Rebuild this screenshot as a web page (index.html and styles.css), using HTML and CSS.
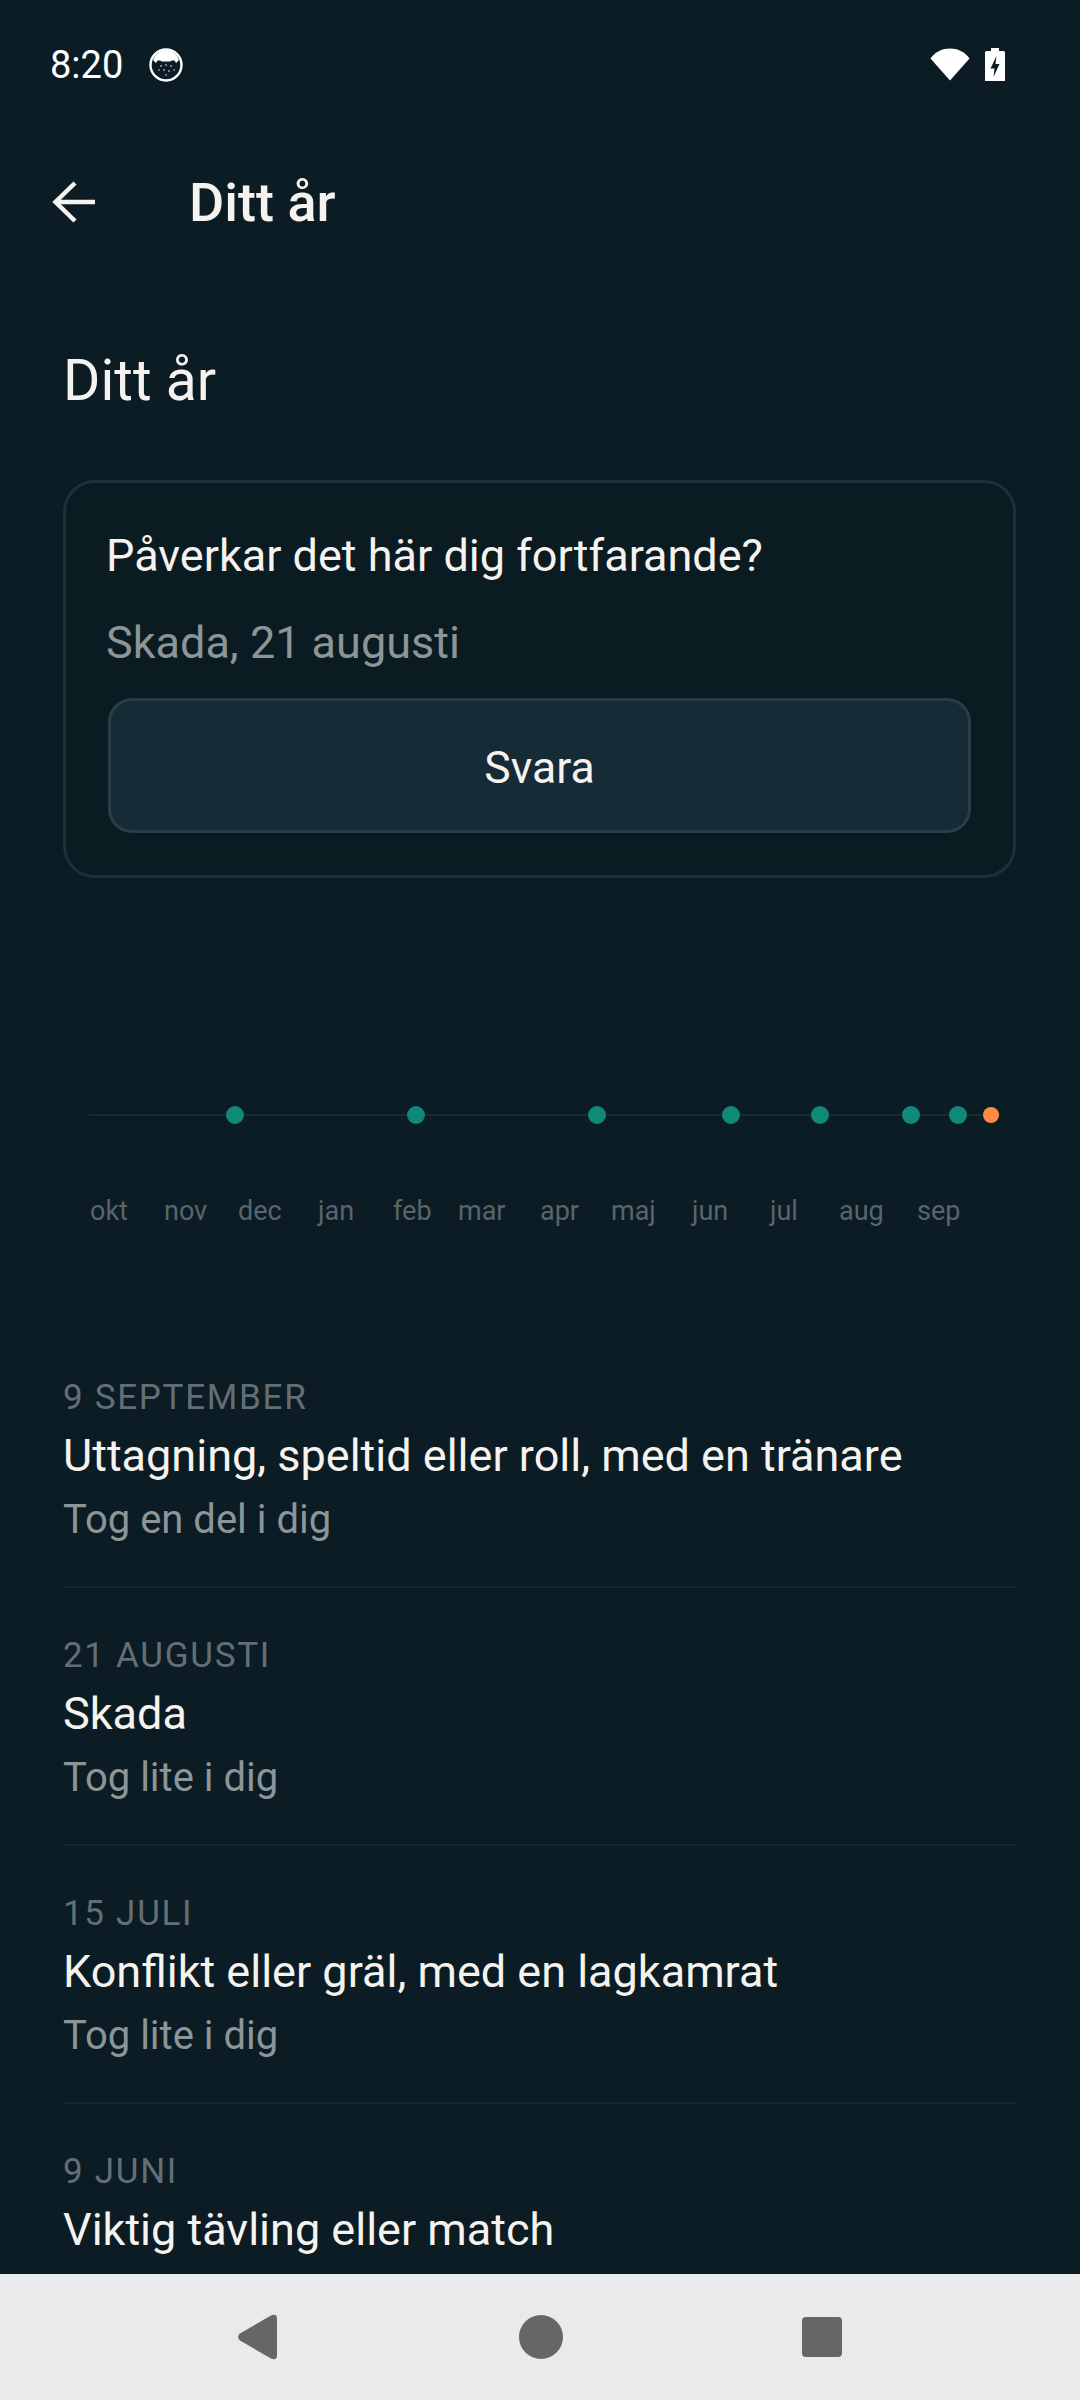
FILE: index.html
```html
<!DOCTYPE html>
<html lang="sv">
<head>
    <meta charset="UTF-8">
    <meta name="viewport" content="width=device-width, initial-scale=1.0">
    <title>Ditt år</title>
    <link rel="stylesheet" href="styles.css">
</head>
<body>
    <div class="screen">
        <div class="statusbar">
            <div class="status-left">
                <span class="clock">8:20</span>
                <svg class="cat" width="34" height="34" viewBox="0 0 34 34">
                    <circle cx="17" cy="17" r="15.500" fill="#0b1c25" stroke="#fff" stroke-width="2.400"/>
                    <path d="M4 12C7 5 11 2.500 17 2.500S27 5 30 12L27 15 25.500 12.500 23 12.500 21 13.500H13L11 12.500 8.500 12.500 7 15Z" fill="#fff"/>
                    <g fill="#fff">
                        <circle cx="12" cy="18" r=".8"/>
                        <circle cx="17" cy="17" r=".8"/>
                        <circle cx="22" cy="18" r=".8"/>
                        <circle cx="10" cy="22" r=".7"/>
                        <circle cx="15" cy="22" r=".8"/>
                        <circle cx="20" cy="23" r=".8"/>
                        <circle cx="25" cy="22" r=".7"/>
                        <circle cx="17" cy="27" r=".7"/>
                    </g>
                </svg>
            </div>
            <div class="status-right">
                <svg width="40" height="33" viewBox="0 0 40 33"><path d="M.5 10.500C5.500 3.500 12.500.5 20 .5S34.500 3.500 39.500 10.500L20 32.500Z" fill="#fff"/></svg>
                <svg width="20" height="33" viewBox="0 0 20 33"><path d="M6 0H14V3H18.500Q20 3 20 4.500V33H0V4.500Q0 3 1.500 3H6Z" fill="#fff"/><path d="M11.500 8 5.500 20.500H9.500L8.500 29 14.500 16H10.500Z" fill="#0b1c25"/></svg>
            </div>
        </div>

        <div class="topbar">
            <svg class="back" width="44" height="42" viewBox="0 0 44 42"><path d="M43 21H4M23 2 3.500 21 23 40" fill="none" stroke="#f6f3ee" stroke-width="4.500"/></svg>
            <h2>Ditt år</h2>
        </div>

        <div class="content">
            <h1>Ditt år</h1>

            <div class="card">
                <div class="question">Påverkar det här dig fortfarande?</div>
                <div class="event">Skada, 21 augusti</div>
                <button type="button" class="answer">Svara</button>
            </div>

            <div class="chart">
                <div class="line"></div>
                <span class="dot" style="left:163px"></span>
                <span class="dot" style="left:344px"></span>
                <span class="dot" style="left:525px"></span>
                <span class="dot" style="left:659px"></span>
                <span class="dot" style="left:748px"></span>
                <span class="dot" style="left:839px"></span>
                <span class="dot" style="left:886px"></span>
                <span class="dot now" style="left:920px"></span>
                <span class="month" style="left:27px">okt</span>
                <span class="month" style="left:101px">nov</span>
                <span class="month" style="left:175px">dec</span>
                <span class="month" style="left:255px">jan</span>
                <span class="month" style="left:330px">feb</span>
                <span class="month" style="left:395px">mar</span>
                <span class="month" style="left:477px">apr</span>
                <span class="month" style="left:548px">maj</span>
                <span class="month" style="left:629px">jun</span>
                <span class="month" style="left:707px">jul</span>
                <span class="month" style="left:776px">aug</span>
                <span class="month" style="left:854px">sep</span>
            </div>

            <div class="list">
                <div class="row">
                    <div class="date">9 SEPTEMBER</div>
                    <div class="title">Uttagning, speltid eller roll, med en tränare</div>
                    <div class="sub">Tog en del i dig</div>
                </div>
                <div class="row">
                    <div class="date">21 AUGUSTI</div>
                    <div class="title">Skada</div>
                    <div class="sub">Tog lite i dig</div>
                </div>
                <div class="row">
                    <div class="date">15 JULI</div>
                    <div class="title">Konflikt eller gräl, med en lagkamrat</div>
                    <div class="sub">Tog lite i dig</div>
                </div>
                <div class="row">
                    <div class="date">9 JUNI</div>
                    <div class="title">Viktig tävling eller match</div>
                </div>
            </div>
        </div>

        <div class="navbar">
            <svg width="42" height="46" viewBox="0 0 42 46"><path d="M3 19.500 34 1.500Q40-1 40 5V41Q40 47 34 44.500L3 26.500Q-1 23 3 19.500Z" fill="#666"/></svg>
            <div class="nav-home"></div>
            <div class="nav-square"></div>
        </div>
    </div>
</body>
</html>
```

FILE: styles.css
```css
html, body {
    margin: 0;
    padding: 0;
}
body {
    font-family: Roboto, "Noto Sans", sans-serif;
    background-color: #0b1c25;
}
.screen {
    width: 1080px;
    height: 2400px;
    display: flex;
    flex-direction: column;
    overflow: hidden;
}
.statusbar {
    height: 128px;
    flex: none;
    display: flex;
    justify-content: space-between;
    align-items: center;
    padding: 0 75px 0 50px;
    box-sizing: border-box;
}
.status-left {
    display: flex;
    align-items: center;
    gap: 26px;
    margin-top: 2px;
}
.status-right {
    display: flex;
    align-items: center;
    gap: 15px;
}
.clock {
    color: #fff;
    font-size: 38px;
}
.topbar {
    height: 148px;
    flex: none;
    display: flex;
    align-items: center;
    padding-left: 52px;
}
.topbar h2 {
    margin: 0 0 0 93px;
    font-size: 54px;
    font-weight: 500;
    color: #f6f3ee;
}
.content {
    flex: 1;
    min-height: 0;
    overflow: hidden;
    padding: 0 64px 0 63px;
}
h1 {
    margin: 67px 0 0;
    font-size: 57px;
    line-height: 76px;
    font-weight: 400;
    color: #f6f3ee;
}
.card {
    margin-top: 61px;
    border: 3px solid #1f3039;
    border-radius: 32px;
    padding: 44px 42px 42px;
    background-color: #0b1b22;
}
.question {
    margin-left: -2px;
    font-size: 45px;
    line-height: 58px;
    color: #f6f3ee;
}
.event {
    margin: 29px 0 0 -2px;
    font-size: 45px;
    line-height: 58px;
    color: #8c9597;
}
.answer {
    display: block;
    width: 100%;
    height: 135px;
    margin-top: 26px;
    padding-top: 5px;
    background-color: #152b36;
    border: 3px solid #2a3e48;
    border-radius: 24px;
    color: #f6f3ee;
    font-family: inherit;
    font-size: 44.500px;
}
.chart {
    position: relative;
    height: 452px;
}
.line {
    position: absolute;
    left: 26px;
    right: 16px;
    top: 236px;
    height: 2px;
    background-color: #172932;
}
.dot {
    position: absolute;
    top: 228px;
    width: 18px;
    height: 18px;
    border-radius: 50%;
    background-color: #0f8a78;
}
.dot.now {
    top: 229px;
    width: 16px;
    height: 16px;
    background-color: #ff8a42;
}
.month {
    position: absolute;
    top: 315px;
    font-size: 27px;
    line-height: 36px;
    color: #59656b;
}
.row {
    height: 258px;
    box-sizing: border-box;
    border-bottom: 2px solid #152730;
    padding-top: 46px;
}
.row:last-child {
    border-bottom: none;
}
.date {
    font-size: 35px;
    line-height: 44px;
    letter-spacing: 1.7px;
    color: #636f75;
}
.title {
    margin-top: 7px;
    font-size: 45px;
    line-height: 58px;
    color: #f6f3ee;
}
.sub {
    margin-top: 8px;
    font-size: 40px;
    line-height: 54px;
    color: #8c9597;
}
.navbar {
    height: 126px;
    flex: none;
    display: flex;
    align-items: center;
    justify-content: space-between;
    padding: 0 238px 0 237px;
    background-color: #e9eaec;
}
.nav-home {
    width: 44px;
    height: 44px;
    border-radius: 50%;
    background-color: #666;
}
.nav-square {
    width: 40px;
    height: 40px;
    border-radius: 4px;
    background-color: #666;
}
```
